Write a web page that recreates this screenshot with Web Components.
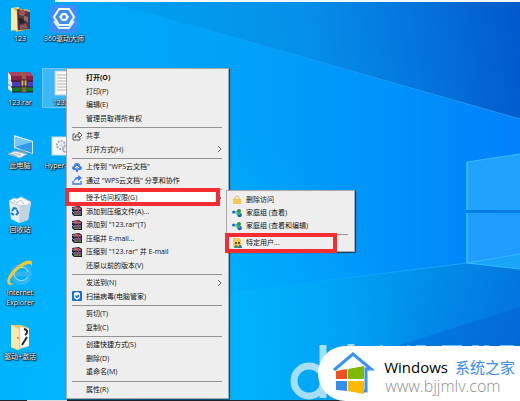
<!DOCTYPE html>
<html lang="zh-CN">
<head>
<meta charset="utf-8">
<title>桌面</title>
<style>
    body{
        margin:0;
        font-family:"Open Sans", "Noto Sans CJK SC", sans-serif;
    }
</style>
</head>
<body>
<desk-screen></desk-screen>

<script>
const pictures = {
    people: `<svg viewBox="0 0 28 28">
        <path d="M5 3l8-1v22l-8 2z" fill="#f8e08f"/><path d="M8 3l16 2v19l-14 3z" fill="#d9b45b"/>
        <path d="M11 4l13 3v17l-12 1z" fill="#553642"/>
        <path d="M13 6l4-2 3 4-3 3-4-1z" fill="#b24b5a"/><path d="M12 13l5 1 2 4-5 1z" fill="#22242c"/>
        <path d="M18 11l4 1v5l-4-2z" fill="#9a6b55"/><path d="M14 20l6-1 2 4-8 1z" fill="#8a5560"/>
        <path d="M15 9l3 1-1 2z" fill="#4b8a57"/><path d="M5 4l6 2v20l-6-2z" fill="#fbe9a5"/></svg>`,
    drive: `<svg viewBox="0 0 28 28">
        <rect width="28" height="28" rx="4" fill="#3d8dfb"/>
        <path d="M9 4h10l5 8-5 8H9l-5-8z" fill="none" stroke="#fff" stroke-width="2"/>
        <path d="M4 16l5 7h10l5-7" fill="none" stroke="#e6f1ff" stroke-width="2"/>
        <path d="M12 8h4l3 4-3 4h-4l-3-4z" fill="#fff"/><circle cx="14" cy="12" r="2" fill="#3d8dfb"/></svg>`,
    books: `<svg viewBox="0 0 28 28">
        <path d="M2 3h22l3 4H5z" fill="#a84368"/><path d="M4 7h23v6H6z" fill="#8a2047"/>
        <path d="M2 3l3 4v5l-3-2z" fill="#eee"/>
        <path d="M2 10l3 3h22v5H6l-4-3z" fill="#4a3bc4"/><path d="M2 10l4 3v5l-4-3z" fill="#ddd"/>
        <path d="M2 16l4 2h21v5H6l-4-3z" fill="#18772c"/><path d="M2 16l4 2v5l-4-3z" fill="#e8e8e8"/>
        <path d="M5 12h22M5 18h22M6 23h21" stroke="#251b28" fill="none"/>
        <path d="M14 3h4l2 4v16h-4V7z" fill="#92613b"/><rect x="15" y="11" width="6" height="6" fill="#cfac68" stroke="#4b2d20"/>
        <path d="M18 10v9" stroke="#382218" stroke-width="1"/></svg>`,
    text: `<svg viewBox="0 0 28 28">
        <path d="M5 2h18v24H5z" fill="#fafafa" stroke="#b9c7d2"/>
        <path d="M7 6h14M7 9h14M7 12h14M7 15h14M7 18h14M7 21h14" stroke="#b4b4b4"/></svg>`,
    computer: `<svg viewBox="0 0 28 28">
        <path d="M8 3l19 6v13L8 16z" fill="#d6ecf7"/><path d="M9 5l17 5v11L9 15z" fill="#2b9bea"/>
        <path d="M9 5l17 5-17 5z" fill="#76c6f8"/><path d="M14 17l5 2v3l-6-2z" fill="#7f9bae"/>
        <path d="M2 22l7-3 12 3-7 4z" fill="#f0f2f3" stroke="#9bb1bf" stroke-width="1"/>
        <path d="M5 22l6 2M8 21l7 2" stroke="#a7b4bc"/></svg>`,
    gears: `<svg viewBox="0 0 28 28">
        <rect x="2" y="5" width="24" height="18" fill="#f8f8f8" stroke="#d2dce3"/>
        <circle cx="11" cy="13" r="4" fill="none" stroke="#9fadbb" stroke-width="2" stroke-dasharray="2 1"/>
        <circle cx="11" cy="13" r="2" fill="#d6e2ec"/><circle cx="16" cy="17" r="3" fill="none" stroke="#b1bac3" stroke-width="2"/></svg>`,
    bin: `<svg viewBox="0 0 28 28">
        <path d="M3 5l22 1-3 18-9 3-8-4z" fill="#e3edf3"/><path d="M14 7l11-1-3 18-9 3z" fill="#c4d3dd"/>
        <path d="M3 5l5-3 3 1 4-2 4 2 6 3-3 3-8 1z" fill="#fafafa" stroke="#bdcbd4" stroke-width="1"/>
        <path d="M8 4l3 3 4-3 3 4" stroke="#b7c5cf" fill="none"/>
        <path d="M6 15l2-3 3 1M11 14l1 3-2 2M8 19l-3-2" stroke="#1a79ca" stroke-width="2" fill="none"/></svg>`,
    explorer: `<svg viewBox="0 0 28 28">
        <path d="M23 18c-3 8-15 7-16-3C7 5 23 4 23 15H9" fill="none" stroke="#35b5ee" stroke-width="5"/>
        <path d="M22 18c-4 6-13 4-14-3C8 7 21 6 22 13" fill="none" stroke="#9be2fb" stroke-width="1"/>
        <path d="M5 26C-3 26 3 13 12 7c7-6 14-7 14-3 0 1 0 2-1 4 0-2 0-3-2-3-6 0-18 11-19 17 0 2 1 3 4 2z" fill="#f8c72d"/></svg>`,
    folder: `<svg viewBox="0 0 28 28">
        <path d="M5 2h10l8 3v18l-12 4-6-3z" fill="#eccb74"/><path d="M14 4l9 2v17l-9 2z" fill="#fdfdfd"/>
        <path d="M18 6c4 1 4 4 1 6M21 14l-5 8" stroke="#262b31" stroke-width="2" fill="none"/>
        <path d="M5 2l8 4v21l-8-3z" fill="#fbe8a6"/><circle cx="12" cy="15" r="1" fill="#cd7b3e"/></svg>`,
    share: `<svg viewBox="0 0 10 10"><path d="M3 3H1v6h7V7M3 7c0-3 2-4 4-4V1l3 3-3 3V5C5 5 4 5 3 7z" fill="none" stroke="#333" stroke-width=".8"/></svg>`,
    cloud: `<svg viewBox="0 0 10 10"><path d="M2 8a2 2 0 010-4 3 3 0 016 0 2 2 0 010 4z" fill="#3c7df0"/><path d="M5 9V5M3 6l2-2 2 2" stroke="#fff" fill="none"/><path d="M5 7v3" stroke="#3c7df0" stroke-width="2"/></svg>`,
    send: `<svg viewBox="0 0 10 10"><path d="M1 6v3h8V6" fill="none" stroke="#3c7df0" stroke-width="1.4"/><path d="M2 7c0-4 2-5 4-5V0l4 3-4 3V4C4 4 3 5 2 7z" fill="#3c7df0"/></svg>`,
    rar: `<svg viewBox="0 0 10 10"><path d="M0 1l7-1 3 2v8H2L0 8z" fill="#29212c"/><path d="M1 1h6l2 2H3z" fill="#c43c6b"/><path d="M2 5h7v1H2z" fill="#5d61d8"/><path d="M2 8h7v1H2z" fill="#27a064"/><path d="M0 2l2 1h7M0 5l2 2h7" stroke="#e6e0e6" stroke-width=".6" fill="none"/><path d="M5 1h2v8H6V3z" fill="#a8474a"/></svg>`,
    shield: `<svg viewBox="0 0 10 10"><rect width="10" height="10" rx="1" fill="#176ce8"/><path d="M2 2l3-1 3 1v3c0 2-1 3-3 4-2-1-3-2-3-4z" fill="#fff"/><path d="M3 4c1 1 3 1 4-1v2c0 1-1 2-2 2S3 6 3 4z" fill="#176ce8"/></svg>`,
    lock: `<svg viewBox="0 0 10 10"><path d="M3 5V3a2 2 0 014 0v2" fill="none" stroke="#d9b765"/><rect x="1" y="4" width="8" height="5" fill="#f4bd42"/><path d="M1 6h8M1 8h8" stroke="#ffdb82" stroke-width=".6"/></svg>`,
    group: `<svg viewBox="0 0 10 10"><path d="M1 4l6-2v6z" fill="#68c2b1"/><circle cx="1.6" cy="4" r="1.6" fill="#1d6fd0"/><circle cx="7" cy="3" r="2" fill="#23944b"/><circle cx="7.6" cy="7" r="2.2" fill="#1b63b5"/><circle cx="6.6" cy="5.6" r="1.5" fill="#3ab45c"/></svg>`,
    users: `<svg viewBox="0 0 10 10"><path d="M1 0h6l2 2v7H1z" fill="#f3cd58"/><circle cx="4" cy="5" r="1.2" fill="#6d5a3c"/><circle cx="7" cy="5" r="1.2" fill="#6d5a3c"/><path d="M2 10c0-4 4-4 4 0z" fill="#4b9449"/><path d="M6 10c0-4 4-4 4 0z" fill="#39739e"/></svg>`
};

class deskScreen extends HTMLElement{
    constructor(){
        super();
        this.attachShadow({mode: "open"});
    }

    connectedCallback(){
        this.shadowRoot.innerHTML = `
            <style>
                :host{
                    display:block;
                    position:relative;
                    min-height:100vh;
                    overflow:hidden;
                }
                desk-wallpaper{
                    position:absolute;
                    inset:0;
                }
                .icons{
                    position:relative;
                    box-sizing:border-box;
                    min-height:100vh;
                    padding:4px 0 16px;
                    display:grid;
                    grid-template-columns:40px 44px;
                    grid-template-rows:repeat(6, 1fr);
                    column-gap:2px;
                    align-items:start;
                }
                .left{
                    grid-column:1;
                }
                .main{
                    position:absolute;
                    left:66px;
                    top:68px;
                    bottom:2px;
                    width:161px;
                }
                .sub{
                    position:absolute;
                    left:226px;
                    top:190px;
                    width:127px;
                    --mark-inset:-3px 17px -4px -2px;
                }
                site-badge{
                    position:absolute;
                    right:0;
                    bottom:0;
                }
            </style>

            <desk-wallpaper></desk-wallpaper>
            <section class="icons">
                <desk-icon name="people">123</desk-icon>
                <desk-icon name="drive">360驱动大师</desk-icon>
                <desk-icon name="books">123.rar</desk-icon>
                <desk-icon name="text" selected>123.txt</desk-icon>
                <desk-icon name="computer">此电脑</desk-icon>
                <desk-icon name="gears">Hyper-V.bat</desk-icon>
                <desk-icon class="left" name="bin">回收站</desk-icon>
                <desk-icon class="left" name="explorer">Internet<br>Explorer</desk-icon>
                <desk-icon class="left" name="folder">驱动+激活</desk-icon>
            </section>

            <context-menu class="main">
                <menu-item strong>打开(O)</menu-item>
                <menu-item>打印(P)</menu-item>
                <menu-item>编辑(E)</menu-item>
                <menu-item>管理员取得所有权</menu-item>
                <menu-line></menu-line>
                <menu-item name="share">共享</menu-item>
                <menu-item more>打开方式(H)</menu-item>
                <menu-line></menu-line>
                <menu-item name="cloud">上传到 "WPS云文档"</menu-item>
                <menu-item name="send">通过 "WPS云文档" 分享和协作</menu-item>
                <menu-line></menu-line>
                <menu-item more marked active>授予访问权限(G)</menu-item>
                <menu-item name="rar">添加到压缩文件(A)...</menu-item>
                <menu-item name="rar">添加到 "123.rar"(T)</menu-item>
                <menu-item name="rar">压缩并 E-mail...</menu-item>
                <menu-item name="rar">压缩到 "123.rar" 并 E-mail</menu-item>
                <menu-item>还原以前的版本(V)</menu-item>
                <menu-line></menu-line>
                <menu-item more>发送到(N)</menu-item>
                <menu-item name="shield">扫描病毒(电脑管家)</menu-item>
                <menu-line></menu-line>
                <menu-item>剪切(T)</menu-item>
                <menu-item>复制(C)</menu-item>
                <menu-line></menu-line>
                <menu-item>创建快捷方式(S)</menu-item>
                <menu-item>删除(D)</menu-item>
                <menu-item>重命名(M)</menu-item>
                <menu-line></menu-line>
                <menu-item>属性(R)</menu-item>
            </context-menu>

            <context-menu class="sub">
                <menu-item name="lock">删除访问</menu-item>
                <menu-item name="group">家庭组 (查看)</menu-item>
                <menu-item name="group">家庭组 (查看和编辑)</menu-item>
                <menu-line></menu-line>
                <menu-item name="users" marked>特定用户...</menu-item>
            </context-menu>

            <site-badge></site-badge>
        `;
    }
}

class deskWallpaper extends HTMLElement{
    constructor(){
        super();
        this.attachShadow({mode: "open"});
    }

    connectedCallback(){
        this.shadowRoot.innerHTML = `
            <style>
                :host{
                    display:block;
                }
                svg{
                    display:block;
                    width:100%;
                    height:100%;
                }
            </style>
            <svg viewBox="0 0 520 401" preserveAspectRatio="none" aria-hidden="true">
                <defs>
                    <linearGradient id="base" x1="0" y1="0" x2="1" y2="0">
                        <stop offset="0" stop-color="#00a9f8"/>
                        <stop offset=".45" stop-color="#00a2f8"/>
                        <stop offset=".75" stop-color="#0092fa"/>
                        <stop offset="1" stop-color="#0080fb"/>
                    </linearGradient>
                    <linearGradient id="sky" gradientUnits="userSpaceOnUse" x1="130" y1="80" x2="520" y2="20">
                        <stop offset="0" stop-color="#00a0f0"/>
                        <stop offset=".45" stop-color="#0590ea"/>
                        <stop offset=".75" stop-color="#0473dc"/>
                        <stop offset="1" stop-color="#0259cb"/>
                    </linearGradient>
                    <linearGradient id="ground" gradientUnits="userSpaceOnUse" x1="240" y1="280" x2="520" y2="370">
                        <stop offset="0" stop-color="#00aafa"/>
                        <stop offset=".5" stop-color="#0096ee"/>
                        <stop offset="1" stop-color="#046fdb"/>
                    </linearGradient>
                    <radialGradient id="low" gradientUnits="userSpaceOnUse" cx="120" cy="401" r="300">
                        <stop offset="0" stop-color="#00b8ff" stop-opacity=".9"/>
                        <stop offset=".4" stop-color="#00b8ff" stop-opacity=".7"/>
                        <stop offset="1" stop-color="#00b8ff" stop-opacity="0"/>
                    </radialGradient>
                    <linearGradient id="fade" x1="0" y1="0" x2="1" y2="0">
                        <stop offset="0" stop-color="#35b5ff" stop-opacity="0"/>
                        <stop offset="1" stop-color="#35b5ff" stop-opacity=".6"/>
                    </linearGradient>
                </defs>
                <rect width="520" height="401" fill="url(#base)"/>
                <path d="M100 0H520V119L120 5z" fill="url(#sky)"/>
                <path d="M120 5L520 119" stroke="url(#fade)"/>
                <path d="M180 299L467 263L520 269V401H180z" fill="url(#ground)"/>
                <path d="M240 291L467 263" stroke="url(#fade)"/>
                <path d="M400 345L520 307V401H400z" fill="#0559cc" opacity=".35"/>
                <rect width="520" height="401" fill="url(#low)"/>
                <path d="M467 162L520 154V210H467z" fill="#20a2ff"/>
                <path d="M467 213H520V269L467 263z" fill="#209bff"/>
                <path d="M467 263L520 254V269z" fill="#18a5f8"/>
                <path d="M467 263L520 254M467 162L520 154M467 263L520 269" fill="none" stroke="#35bcff"/>
                <path d="M467 211H520" stroke="#0879dd" stroke-width="2"/>
                <path d="M467 162V210M467 213V263" stroke="#4addff"/>
                <g fill="none" stroke="#a6def8" stroke-width="7">
                    <circle cx="309" cy="381" r="15"/>
                    <path d="M323 345V398M351 344V360"/>
                    <path d="M380 346h3M407 346h3M416 346h10M442 346h20M472 346h7M484 346h5M500 346h14" stroke-width="2" opacity=".7"/>
                </g>
                <path d="M0 400H520V401H0z" fill="#20242b"/>
                <path d="M27 400H67V401H27z" fill="#d5dce0"/>
                <path d="M55 0H520V2H55z" fill="#f4f8fa"/>
            </svg>
        `;
    }
}

class deskIcon extends HTMLElement{
    constructor(){
        super();
        this.attachShadow({mode: "open"});
    }

    connectedCallback(){
        this.shadowRoot.innerHTML = `
            <style>
                :host{
                    display:block;
                }
                button{
                    width:100%;
                    padding:1px 0 0;
                    border:0;
                    background:none;
                    display:flex;
                    flex-direction:column;
                    align-items:center;
                    gap:1px;
                    font:7px/10px "Open Sans", "Noto Sans CJK SC", sans-serif;
                    color:#fff;
                    text-shadow:0 0 1px #000, 0 0 2px #000, 1px 1px 1px #000;
                    white-space:nowrap;
                }
                :host([selected]) button{
                    background:rgba(150, 210, 250, .4);
                    outline:1px solid rgba(160, 215, 250, .5);
                    outline-offset:-1px;
                }
                svg{
                    display:block;
                    width:28px;
                    height:28px;
                }
            </style>
            <button type="button">${pictures[this.getAttribute("name")]}<span><slot></slot></span></button>
        `;
    }
}

class contextMenu extends HTMLElement{
    constructor(){
        super();
        this.attachShadow({mode: "open"});
    }

    connectedCallback(){
        this.setAttribute("role", "menu");
        this.shadowRoot.innerHTML = `
            <style>
                :host{
                    display:flex;
                    flex-direction:column;
                    padding:2px 0;
                    border:1px solid #a8a8a8;
                    background:#eee;
                    box-shadow:1px 1px 1px rgba(0, 0, 0, .5);
                }
            </style>
            <slot></slot>
        `;
    }
}

class menuItem extends HTMLElement{
    constructor(){
        super();
        this.attachShadow({mode: "open"});
    }

    connectedCallback(){
        const icon = pictures[this.getAttribute("name")] || "";
        const arrow = this.hasAttribute("more")
            ? `<svg class="arrow" viewBox="0 0 5 8"><path d="M1 1l3 3-3 3" fill="none" stroke="#444" stroke-width=".8"/></svg>`
            : "";
        this.shadowRoot.innerHTML = `
            <style>
                :host{
                    display:flex;
                    flex:1 0 13px;
                    position:relative;
                }
                button{
                    flex:1;
                    min-width:0;
                    padding:0 6px 0 5px;
                    border:0;
                    background:none;
                    display:flex;
                    align-items:center;
                    gap:4px;
                    font:7px/13px "Open Sans", "Noto Sans CJK SC", sans-serif;
                    color:#111;
                    text-align:left;
                    white-space:nowrap;
                }
                :host([strong]) button{
                    font-weight:bold;
                }
                .icon, .icon svg{
                    display:block;
                    width:10px;
                    height:10px;
                }
                .label{
                    flex:1;
                }
                .arrow{
                    width:5px;
                    height:8px;
                }
                /* red frame around the entry */
                :host([marked])::after{
                    content:"";
                    position:absolute;
                    inset:var(--mark-inset, -3px 8px -1px -2px);
                    border:4px solid #f52d30;
                    pointer-events:none;
                }
                :host([active]) button{
                    background:linear-gradient(#fff, #fff) no-repeat 0 0 / calc(100% - 10px) 100%;
                }
            </style>
            <button type="button" role="menuitem">
                <span class="icon">${icon}</span>
                <span class="label"><slot></slot></span>
                ${arrow}
            </button>
        `;
    }
}

class menuLine extends HTMLElement{
    constructor(){
        super();
        this.attachShadow({mode: "open"});
    }

    connectedCallback(){
        this.shadowRoot.innerHTML = `
            <style>
                :host{
                    display:block;
                    padding:2px 6px 1px 5px;
                }
                hr{
                    margin:0;
                    border:0;
                    height:1px;
                    background:#949494;
                }
            </style>
            <hr>
        `;
    }
}

class siteBadge extends HTMLElement{
    constructor(){
        super();
        this.attachShadow({mode: "open"});
    }

    connectedCallback(){
        this.shadowRoot.innerHTML = `
            <style>
                :host{
                    display:flex;
                    align-items:center;
                    gap:8px;
                    padding:5px 5px 5px 13px;
                    border-radius:28px 0 0 28px;
                    background:#fff;
                }
                svg{
                    width:45px;
                    height:45px;
                }
                .words{
                    padding-top:6px;
                }
                .name{
                    display:flex;
                    gap:7px;
                    font-size:15px;
                    line-height:20px;
                    color:#000;
                    white-space:nowrap;
                }
                .name b{
                    font-weight:400;
                    color:#368bf3;
                }
                a{
                    display:block;
                    font-size:16px;
                    line-height:19px;
                    font-weight:300;
                    color:#8f8f8f;
                    text-decoration:none;
                    padding-left:1px;
                }
            </style>
            <svg viewBox="0 0 45 45" aria-hidden="true">
                <path d="M3 19L22 3l18 15h-5v22H27" fill="none" stroke="#3993f5" stroke-width="3"/>
                <path d="M5 20l11-2v10H5z" fill="#ef5024"/>
                <path d="M17 18l16-3v13H17z" fill="#7dba00"/>
                <path d="M5 30h11v10L5 39z" fill="#368df0"/>
                <path d="M17 30h16v13l-16-3z" fill="#fdb900"/>
            </svg>
            <div class="words">
                <div class="name"><span>Windows</span><b>系统之家</b></div>
                <a href="#">www.bjjmlv.com</a>
            </div>
        `;
    }
}

window.customElements.define("desk-screen", deskScreen);
window.customElements.define("desk-wallpaper", deskWallpaper);
window.customElements.define("desk-icon", deskIcon);
window.customElements.define("context-menu", contextMenu);
window.customElements.define("menu-item", menuItem);
window.customElements.define("menu-line", menuLine);
window.customElements.define("site-badge", siteBadge);
</script>
</body>
</html>
